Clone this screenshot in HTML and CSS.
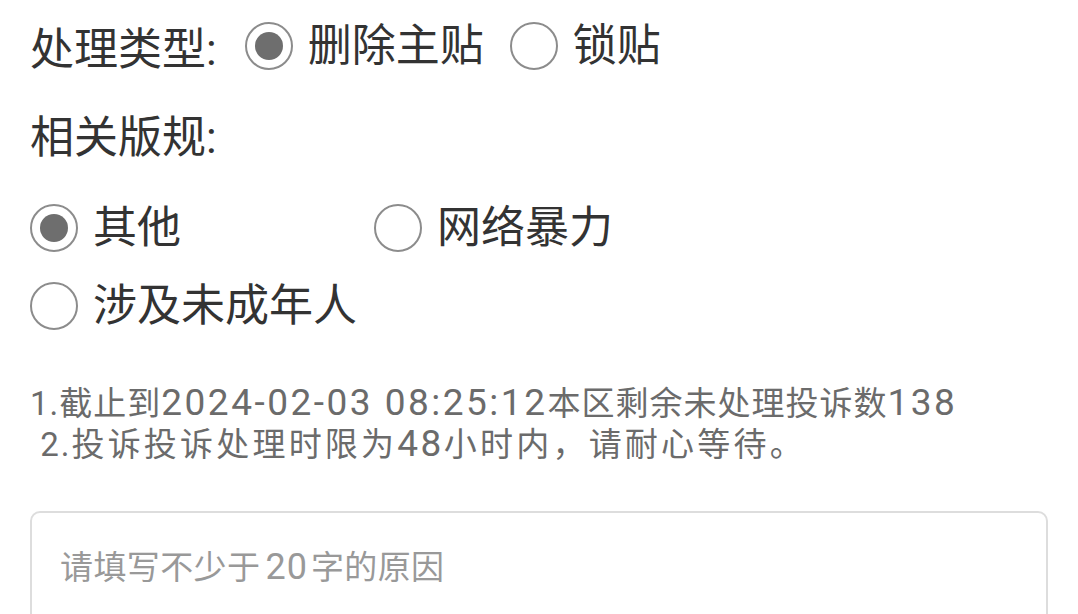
FILE: index.html
```html
<!DOCTYPE html>
<html lang="zh-CN">
<head>
<meta charset="utf-8">
<link rel="stylesheet" href="styles.css">
</head>
<body>
<div class="page">
  <div class="row type-row">
    <span class="label">处理类型:</span>
    <label class="opt"><span class="radio checked"></span><span class="opt-text">删除主贴</span></label>
    <label class="opt"><span class="radio"></span><span class="opt-text">锁贴</span></label>
  </div>
  <div class="row rule-row">
    <span class="label">相关版规:</span>
  </div>
  <div class="rule-grid">
    <label class="opt"><span class="radio checked"></span><span class="opt-text">其他</span></label>
    <label class="opt"><span class="radio"></span><span class="opt-text">网络暴力</span></label>
    <label class="opt"><span class="radio"></span><span class="opt-text">涉及未成年人</span></label>
  </div>
  <div class="notes">
    <div class="note note-1">1.截止到<span class="num">2024-02-03 08:25:12</span>本区剩余未处理投诉数<span class="num">138</span></div>
    <div class="note note-2"><span class="idx">&nbsp;2.</span>投诉投诉处理时限为<span class="num">48</span>小时内，请耐心等待。</div>
  </div>
  <div class="reason">
    <div class="placeholder">请填写不少于<span class="num">20</span>字的原因</div>
  </div>
</div>
</body>
</html>
```
FILE: styles.css
```css
html, body {
  margin: 0;
  padding: 0;
  background: #ffffff;
}
body {
  font-family: "Roboto", "Noto Sans CJK SC", sans-serif;
  color: #333333;
  overflow: hidden;
}
.page {
  padding: 0 30px;
}
.row {
  display: flex;
  align-items: center;
  font-size: 44px;
}
.type-row {
  height: 92px;
}
.type-row .label {
  margin-right: 28px;
}
.type-row .opt + .opt {
  margin-left: 26px;
}
.rule-row {
  height: 84px;
}
.opt {
  display: flex;
  align-items: center;
  gap: 15px;
  font-size: 44px;
  line-height: 1;
}
.radio {
  box-sizing: border-box;
  width: 48px;
  height: 48px;
  border-radius: 50%;
  border: 2px solid #8c8c8c;
  display: flex;
  align-items: center;
  justify-content: center;
  flex: none;
}
.radio.checked::after {
  content: "";
  width: 28px;
  height: 28px;
  border-radius: 50%;
  background: #6e6e6e;
}
.rule-grid {
  margin-top: 13px;
  display: grid;
  grid-template-columns: 344px 344px;
  grid-auto-rows: 78px;
  align-items: center;
}
.notes {
  margin-top: 38px;
  font-size: 33px;
  line-height: 40px;
  color: #6b6b6b;
  white-space: nowrap;
}
.notes .num {
  font-size: 37px;
  letter-spacing: 2.5px;
}
.note-1 {
  letter-spacing: 1px;
}
.note-2 {
  letter-spacing: 3.2px;
}
.note-2 .idx {
  letter-spacing: 2px;
}
.reason {
  margin-top: 46px;
  box-sizing: border-box;
  height: 220px;
  border: 2px solid #dddddd;
  border-radius: 10px;
  padding: 32px 28px;
}
.placeholder {
  font-size: 33px;
  letter-spacing: 0.4px;
  line-height: 44px;
  color: #999999;
}
.placeholder .num {
  font-size: 36px;
  letter-spacing: 1px;
  margin: 0 3px 0 5px;
}
```
